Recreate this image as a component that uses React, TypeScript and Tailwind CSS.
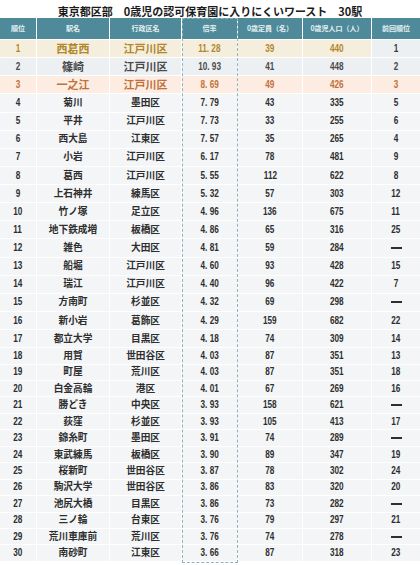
import React from 'react';

type Row = [number, string, string, string, number, number, string];

const rows: Row[] = [
    [1, '西葛西', '江戸川区', '11.28', 39, 440, '1'],
    [2, '篠崎', '江戸川区', '10.93', 41, 448, '2'],
    [3, '一之江', '江戸川区', '8.69', 49, 426, '3'],
    [4, '菊川', '墨田区', '7.79', 43, 335, '5'],
    [5, '平井', '江戸川区', '7.73', 33, 255, '6'],
    [6, '西大島', '江東区', '7.57', 35, 265, '4'],
    [7, '小岩', '江戸川区', '6.17', 78, 481, '9'],
    [8, '葛西', '江戸川区', '5.55', 112, 622, '8'],
    [9, '上石神井', '練馬区', '5.32', 57, 303, '12'],
    [10, '竹ノ塚', '足立区', '4.96', 136, 675, '11'],
    [11, '地下鉄成増', '板橋区', '4.86', 65, 316, '25'],
    [12, '雑色', '大田区', '4.81', 59, 284, '—'],
    [13, '船堀', '江戸川区', '4.60', 93, 428, '15'],
    [14, '瑞江', '江戸川区', '4.40', 96, 422, '7'],
    [15, '方南町', '杉並区', '4.32', 69, 298, '—'],
    [16, '新小岩', '葛飾区', '4.29', 159, 682, '22'],
    [17, '都立大学', '目黒区', '4.18', 74, 309, '14'],
    [18, '用賀', '世田谷区', '4.03', 87, 351, '13'],
    [19, '町屋', '荒川区', '4.03', 87, 351, '18'],
    [20, '白金高輪', '港区', '4.01', 67, 269, '16'],
    [21, '勝どき', '中央区', '3.93', 158, 621, '—'],
    [22, '荻窪', '杉並区', '3.93', 105, 413, '17'],
    [23, '錦糸町', '墨田区', '3.91', 74, 289, '—'],
    [24, '東武練馬', '板橋区', '3.90', 89, 347, '19'],
    [25, '桜新町', '世田谷区', '3.87', 78, 302, '24'],
    [26, '駒沢大学', '世田谷区', '3.86', 83, 320, '20'],
    [27, '池尻大橋', '目黒区', '3.86', 73, 282, '—'],
    [28, '三ノ輪', '台東区', '3.76', 79, 297, '21'],
    [29, '荒川車庫前', '荒川区', '3.76', 74, 278, '—'],
    [30, '南砂町', '江東区', '3.66', 87, 318, '23'],
];

const widths = ['w-[37px]', 'w-[73px]', 'w-[72px]', 'w-[56px]', 'w-[65px]', 'w-[69px]', 'w-[48px]'];
const headers = ['順位', '駅名', '行政区名', '倍率', '0歳定員（名）', '0歳児人口（人）', '前回順位'];

const jp = "font-['Noto_Sans_CJK_JP',sans-serif]";

function Num({ children }: { children: React.ReactNode }) {
    return (
        <span className="inline-block scale-x-[0.78] whitespace-pre font-['Liberation_Sans',sans-serif] text-[10.5px] font-bold">
            {children}
        </span>
    );
}

function DataRow({ row, i }: { row: Row; i: number }) {
    const [rank, name, ward, ratio, cap, pop, prev] = row;
    let bg = 'bg-[#f3f5f7]';
    let fg = 'text-[#2e2e2e]';
    if (i === 0) { bg = 'bg-[#f6eedc]'; fg = 'text-[#b0872c]'; }
    if (i === 1) { bg = 'bg-[#edf0f3]'; fg = 'text-[#4a4a4a]'; }
    if (i === 2) { bg = 'bg-[#fcece2]'; fg = 'text-[#c2713a]'; }
    const big = i < 3;
    const h = i < 17 ? 'h-[18.14px]' : 'h-[16.44px]';
    const jpSize = big ? 'text-[11px]' : 'text-[9.7px]';
    const cell = 'flex items-center justify-center border-r border-white';

    return (
        <div className={`flex ${h} border-b border-white ${bg} ${fg}`}>
            <div className={`${widths[0]} ${cell}`}><Num>{rank}</Num></div>
            <div className={`${widths[1]} ${cell} ${jp} ${jpSize} font-bold leading-none`}>{name}</div>
            <div className={`${widths[2]} ${cell} ${jp} ${jpSize} font-bold leading-none`}>{ward}</div>
            <div className={`${widths[3]} ${cell}`}><Num>{ratio.replace('.', '. ')}</Num></div>
            <div className={`${widths[4]} ${cell}`}><Num>{cap}</Num></div>
            <div className={`${widths[5]} ${cell}`}><Num>{pop}</Num></div>
            <div className={`${widths[6]} flex items-center justify-center ${i === 0 ? 'bg-[#edf0f3] text-[#3a3a3a]' : ''}`}>
                {prev === '—' ? (
                    <span className="block h-[2px] w-[11px] bg-[#2e2e2e]" />
                ) : (
                    <Num>{prev}</Num>
                )}
            </div>
        </div>
    );
}

export default function App() {
    return (
        <div className="relative h-[565px] w-[420px] overflow-hidden bg-white">
            <div className={`flex h-[18px] items-end justify-center pb-[1px] ${jp} text-[11px] font-bold leading-none text-[#1b1b1b]`}>
                東京都区部　0歳児の認可保育園に入りにくいワースト　30駅
            </div>

            <div className="flex h-[22px] border-b border-white bg-[#4f8a9a]">
                {headers.map((t, k) => (
                    <div
                        key={t}
                        className={`${widths[k]} flex items-center justify-center ${k < 6 ? 'border-r border-white' : ''} ${jp} text-[7px] font-bold text-[#e4eff2]`}
                    >
                        {t}
                    </div>
                ))}
            </div>

            {rows.map((r, i) => (
                <DataRow key={r[0]} row={r} i={i} />
            ))}

            {/* dashed frame around the ratio column */}
            <div className="pointer-events-none absolute left-[182px] top-[18px] h-[545px] w-[56px] border-[1.5px] border-dashed border-[#8fb2bf]" />
        </div>
    );
}
